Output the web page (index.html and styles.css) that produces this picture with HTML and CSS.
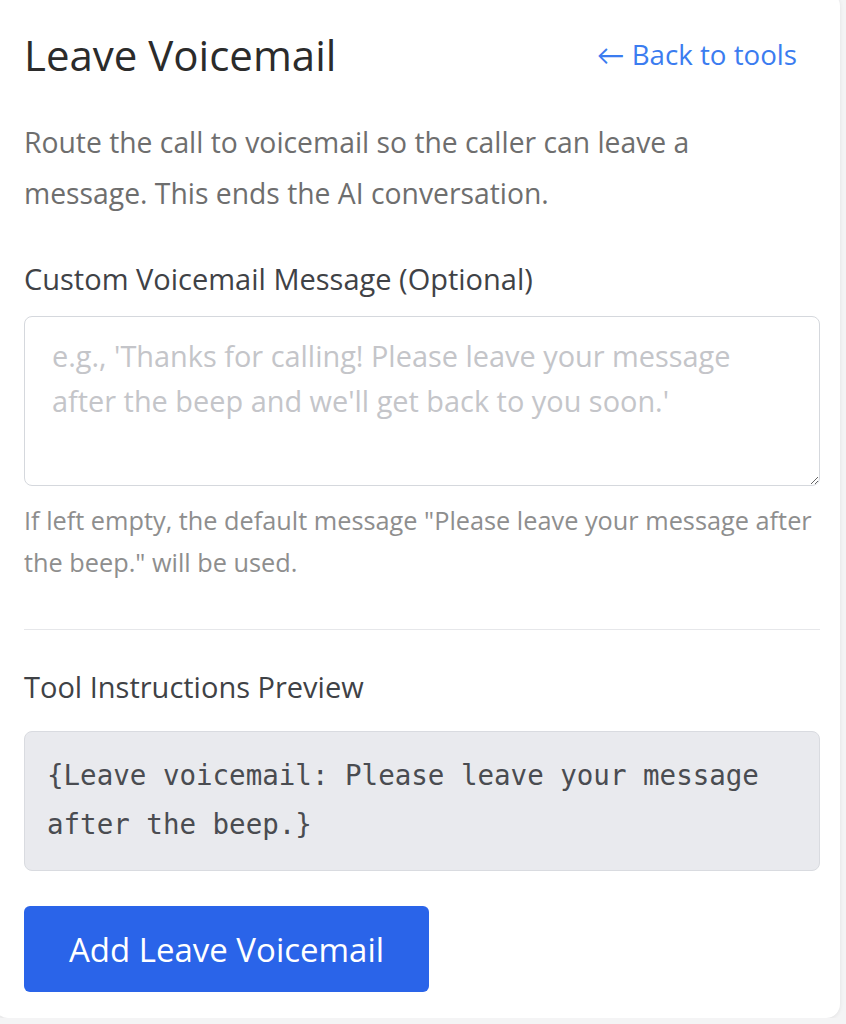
FILE: index.html
```html
<!DOCTYPE html>
<html>
  <head>
    <title>Leave Voicemail</title>
    <meta charset='utf-8'>
    <link rel="stylesheet" href="styles.css">
  </head>

  <body>
    <div class="card">
      <div class="head">
        <h1 class="title">Leave Voicemail</h1>
        <a class="back" href="#">&larr; Back to tools</a>
      </div>

      <p class="desc">Route the call to voicemail so the caller can leave a message. This ends the AI conversation.</p>

      <label class="label" for="vm-msg">Custom Voicemail Message (Optional)</label>
      <textarea id="vm-msg" class="field" placeholder="e.g., 'Thanks for calling! Please leave your message after the beep and we'll get back to you soon.'"></textarea>
      <p class="help">If left empty, the default message "Please leave your message after the beep." will be used.</p>

      <hr class="rule"/>

      <div class="label">Tool Instructions Preview</div>
      <div class="preview">{Leave voicemail: Please leave your message after the beep.}</div>

      <button class="btn">Add Leave Voicemail</button>

      <span class="arrow"></span>
    </div>
  </body>
</html>
```

FILE: styles.css
```css
body {
  margin: 0;
  background: #f4f4f5;
  font-family: "Open Sans", Lato, sans-serif;
  overflow: hidden;
}

.card {
  position: relative;
  box-sizing: border-box;
  width: 846px;
  height: 1026px;
  margin: -8px 0 0 -6px;
  padding: 34px 20px 0 30px;
  background: #fff;
  border-radius: 14px;
  box-shadow: 0 1px 4px rgba(0, 0, 0, 0.08);
}

.head {
  display: flex;
  justify-content: space-between;
  align-items: center;
  height: 56px;
  padding-right: 23px;
}
.title {
  margin: 0;
  font-size: 42px;
  font-weight: 500;
  color: #2b2b2b;
}
.back {
  font-size: 27.7px;
  color: #3b7cf0;
  text-decoration: none;
}

.desc {
  margin: 35px 0 0;
  width: 700px;
  font-size: 28.3px;
  line-height: 51px;
  color: #6e6e6e;
}

.label {
  display: block;
  margin-top: 40px;
  font-size: 29px;
  line-height: 40px;
  font-weight: 500;
  color: #3f4246;
}

.field {
  display: block;
  box-sizing: border-box;
  width: 796px;
  height: 170px;
  margin-top: 17px;
  padding: 16px 27px;
  border: 1px solid #d5d8dd;
  border-radius: 8px;
  font-family: inherit;
  font-size: 28.9px;
  line-height: 45px;
  color: #333;
  resize: vertical;
}
.field::placeholder {
  color: #c4c5c9;
}

.help {
  margin: 13px 0 0;
  font-size: 25.3px;
  line-height: 42px;
  color: #8e8e8e;
}

.rule {
  width: 796px;
  margin: 46px 0 0;
  border: 0;
  border-top: 1px solid #e6e7ea;
}
.rule + .label {
  margin-top: 37px;
}

.preview {
  box-sizing: border-box;
  width: 796px;
  height: 140px;
  margin-top: 24px;
  padding: 19px 22px;
  background: #e9eaee;
  border: 1px solid #d9dbe0;
  border-radius: 8px;
  font-family: "DejaVu Sans Mono", monospace;
  font-size: 27.5px;
  line-height: 49px;
  color: #4a4c51;
}

.btn {
  display: block;
  width: 405px;
  height: 86px;
  margin-top: 35px;
  border: 0;
  border-radius: 6px;
  background: #2a64e9;
  color: #fff;
  font-family: inherit;
  font-size: 33px;
  font-weight: 500;
}

.arrow {
  position: absolute;
  left: 414px;
  bottom: -6px;
  border-left: 8px solid transparent;
  border-right: 8px solid transparent;
  border-top: 8px solid #fff;
}
```
